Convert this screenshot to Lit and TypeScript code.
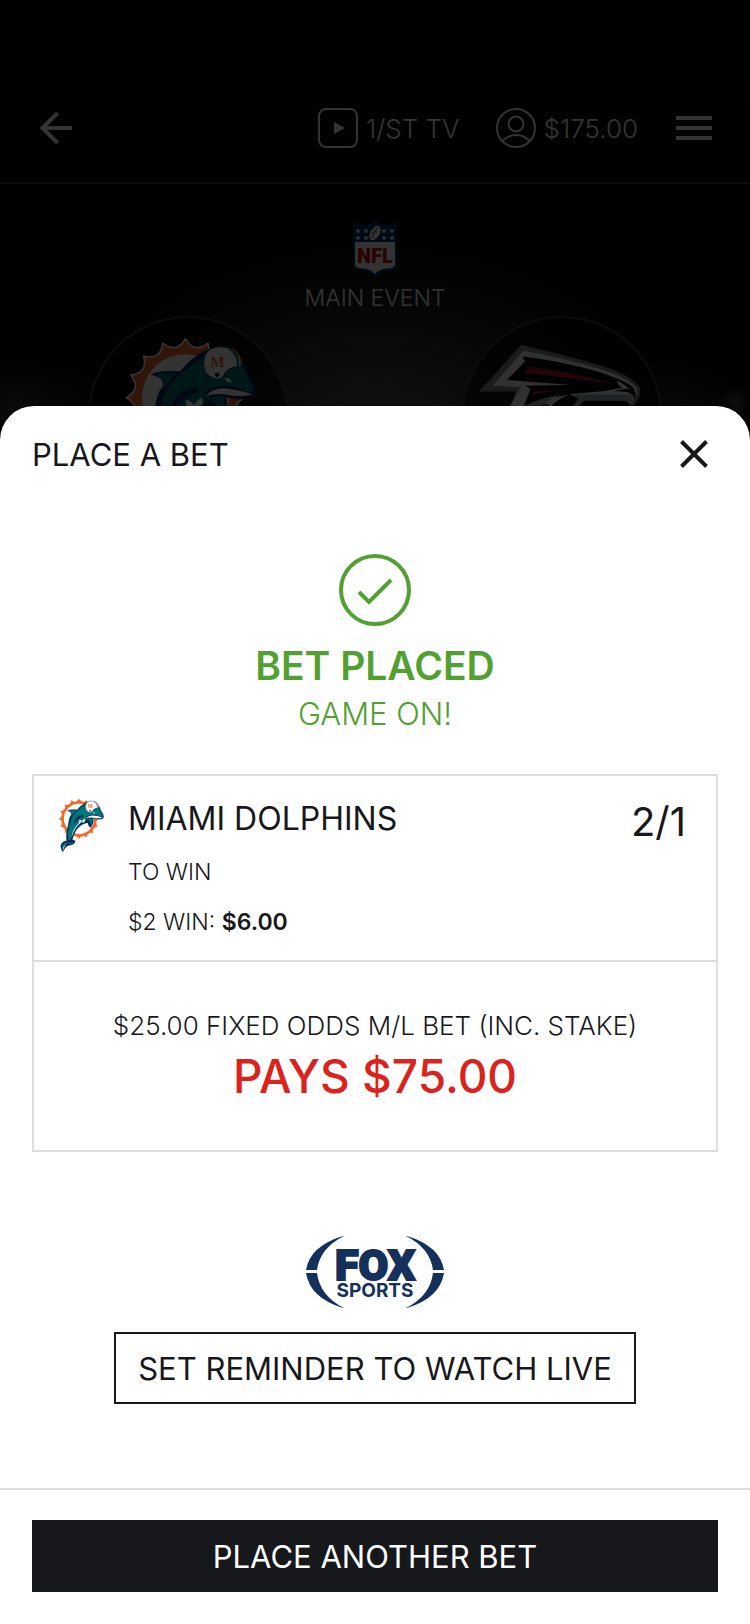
import { LitElement, html, svg, css } from "lit";
import { customElement, property } from "lit/decorators.js";

const SUN_CENTER = { x: 378, y: 562 };

function sunPath(tip: number, valley: number, spikes: number): string {
  const at = (radius: number, turn: number) => {
    const a = turn * Math.PI * 2 - Math.PI / 2;
    return `${(SUN_CENTER.x + radius * Math.cos(a)).toFixed(1)} ${(SUN_CENTER.y + radius * Math.sin(a)).toFixed(1)}`;
  };
  let d = `M${at(tip, 0)}`;
  for (let i = 0; i < spikes; i++) {
    d += `Q${at(valley, (i + 0.5) / spikes)} ${at(tip, (i + 1) / spikes)}`;
  }
  return d + "Z";
}

@customElement("dolphins-logo")
export class DolphinsLogo extends LitElement {
  static styles = css`
    :host { display: block; }
    svg { display: block; width: 100%; height: auto; }
    .letter { font-family: "Liberation Serif", serif; font-weight: 700; font-size: 46px; }
  `;

  render() {
    return html`
      <svg viewBox="196 382 398 470" aria-hidden="true">
        <path d=${sunPath(178, 134, 16)} fill="#f26a2e" stroke="#fff" stroke-width="5" stroke-linejoin="round" />
        <circle cx="378" cy="562" r="131" fill="#fff" />
        <path d="M300 500Q285 494 275 492Q310 478 362 484Q398 440 440 420Q500 400 540 436Q562 462 566 488Q590 520 592 545Q590 564 566 566Q530 568 500 560Q512 590 478 640Q460 630 452 596Q400 602 356 656Q326 700 320 744Q340 746 346 758Q338 786 300 790Q262 794 236 850Q214 812 222 784Q240 752 270 752Q262 680 286 606Q290 550 312 526Q312 508 300 500Z"
          fill="#0b2a55" stroke="#0b2a55" stroke-width="2" stroke-linejoin="round" />
        <path d="M288 493Q320 484 356 490Q326 508 312 540Q318 508 288 493Z" fill="#00757a" />
        <path d="M302 600Q310 540 360 494Q420 440 470 424Q530 420 552 466Q558 490 582 528Q588 544 566 546Q540 528 500 526Q460 526 434 548Q470 560 440 574Q420 590 384 604Q330 652 306 744L286 748Q272 670 302 600Z"
          fill="#00757a" />
        <path d="M372 604Q384 588 380 568Q400 572 412 596Q440 584 426 560Q398 588 350 640Q322 690 314 720Q318 660 372 604Z" fill="#fff" />
        <path d="M440 556Q462 532 500 534Q548 540 580 552Q544 562 500 552Q466 548 440 556Z" fill="#fff" />
        <path d="M452 566Q474 552 496 562Q500 590 478 620Q480 580 452 566Z" fill="#00757a" />
        <path d="M360 548Q410 520 420 540Q372 560 330 610Q336 574 360 548Z" fill="#0b2a55" />
        <path d="M230 792Q250 764 290 764Q260 780 238 824Q228 810 230 792Z" fill="#00757a" />
        <path d="M236 830Q238 802 266 784Q252 800 236 838Z" fill="#fff" />
        <path d="M286 776Q310 762 338 762Q326 776 296 782Z" fill="#00757a" />
        <path d="M496 504Q512 498 518 516Q506 520 496 504Z" fill="#fff" />
        <path d="M430 456Q434 412 480 408Q526 406 548 446Q552 466 540 468Q500 470 492 500Q472 514 450 496Q430 484 430 456Z"
          fill="#fff" stroke="#0b2a55" stroke-width="3" />
        <path d="M508 412Q540 430 536 466" fill="none" stroke="#00757a" stroke-width="7" />
        <path d="M518 414Q548 434 546 462" fill="none" stroke="#f26a2e" stroke-width="5" />
        <path d="M448 416Q424 446 438 480" fill="none" stroke="#00757a" stroke-width="4" />
        <circle cx="474" cy="493" r="7" fill="#0b2a55" />
        <text class="letter" x="475" y="470" text-anchor="middle" fill="#f26a2e">M</text>
      </svg>
    `;
  }
}

@customElement("falcons-logo")
export class FalconsLogo extends LitElement {
  static styles = css`
    :host { display: block; }
    svg { display: block; width: 100%; height: auto; }
  `;

  render() {
    return html`
      <svg viewBox="237 403 482 400" aria-hidden="true">
        <path d="M237 541L362 403Q480 428 600 465Q690 492 715 530Q722 560 692 588L640 640L500 780L300 700L346 541Z" fill="#84898c" />
        <path d="M278 524L370 420Q480 440 590 472Q680 500 704 528Q714 552 690 574L480 740L326 590L362 528Z" fill="#f4f4f4" />
        <path d="M320 507L374 452L366 437Q480 450 590 482Q676 510 696 530Q708 548 700 565Q694 542 670 542L640 540Q660 532 684 534Q660 510 646 510Q652 526 664 530L610 540L520 548L440 562L370 586L390 534L374 524L512 522Z" fill="#000" />
        <path d="M370 486L386 468Q500 480 632 518Q500 498 370 486Z" fill="#a71930" />
        <path d="M392 552L402 540L472 537Q430 546 392 552Z" fill="#a71930" />
        <path d="M372 584Q420 560 480 550Q440 566 424 590L372 590Z" fill="#a5acaf" />
        <path d="M404 590L424 580L448 578L438 590Z" fill="#a71930" />
        <path d="M448 590Q470 562 508 550L536 562L514 590Z" fill="#000" />
        <path d="M540 568L660 568Q690 568 684 590L530 600Z" fill="#000" />
        <path d="M518 550L688 550Q700 560 690 570L552 566L530 592L514 590L532 562Z" fill="#a5acaf" />
      </svg>
    `;
  }
}

@customElement("team-badge")
export class TeamBadge extends LitElement {
  @property() team = "";

  static styles = css`
    :host {
      display: block;
      box-sizing: border-box;
      width: 200px;
      height: 200px;
      border: 2px solid #3c3c3c;
      border-radius: 50%;
      background: rgba(0, 0, 0, 0.55);
    }
    .dolphins { width: 132px; margin: 20px 35px; }
    .falcons { width: 162px; margin: 27px 15px; }
  `;

  render() {
    return this.team === "dolphins"
      ? html`<dolphins-logo class="dolphins"></dolphins-logo>`
      : html`<falcons-logo class="falcons"></falcons-logo>`;
  }
}

const star = (x: number, y: number) => svg`
  <path transform="translate(${x} ${y})" fill="#fff"
    d="M0-2.8L.7-.9L2.7-.9L1.1.4L1.7 2.3L0 1.2L-1.7 2.3L-1.1.4L-2.7-.9L-.7-.9Z" />`;

@customElement("app-root")
export class AppRoot extends LitElement {
  static styles = css`
    :host {
      display: grid;
      min-height: 100vh;
      background: #000;
      color: #17181c;
      font-family: Inter, "Liberation Sans", sans-serif;
      font-size: 31px;
      font-weight: 400;
    }
    * { box-sizing: border-box; }
    h1, h2, h3, p { margin: 0; font-size: inherit; font-weight: inherit; }
    button { font: inherit; color: inherit; background: none; border: 0; padding: 0; cursor: pointer; }
    svg { display: block; flex: none; }
    a { color: inherit; text-decoration: none; }

    .page, .scrim, .sheet { grid-area: 1 / 1; min-width: 0; }
    .scrim { background: rgba(0, 0, 0, 0.8); }

    .page { color: #fff; font-weight: 300; }
    .topbar {
      display: flex;
      align-items: center;
      height: 184px;
      padding: 74px 38px 0 40px;
      border-bottom: 2px solid #383838;
      font-size: 26px;
      background: linear-gradient(#040a08, #000);
    }
    .back { margin-right: auto; }
    .link { display: flex; align-items: center; gap: 8px; }
    .tv { margin-right: 36px; }
    .account { margin-right: 38px; }

    .hero {
      display: flex;
      flex-direction: column;
      align-items: center;
      height: 360px;
      padding-top: 35px;
      font-size: 23px;
      background:
        radial-gradient(circle at 98% 218px, #444, transparent 16px),
        radial-gradient(ellipse 90px 50px at 90% 222px, #262626, transparent),
        radial-gradient(ellipse 100px 50px at 2% 222px, #303030, transparent),
        radial-gradient(ellipse 330px 210px at 50% 250px, #5c5c5c, #222 55%, transparent);
    }
    .event { line-height: 32px; margin: 5px 0 2px; }
    .teams { display: flex; justify-content: center; gap: 174px; }
    .nfl { font: 900 20px Roboto, sans-serif; }

    .sheet {
      align-self: end;
      background: #fff;
      border-radius: 34px 34px 0 0;
    }
    .sheet-head {
      display: flex;
      align-items: center;
      justify-content: space-between;
      height: 96px;
      padding: 0 32px;
    }
    .close { display: grid; place-items: center; width: 48px; height: 48px; }

    .status {
      display: flex;
      flex-direction: column;
      align-items: center;
      padding-top: 52px;
      color: #52a032;
      line-height: 48px;
    }
    .placed { margin-top: 16px; font-size: 39px; font-weight: 600; }
    .light { font-weight: 300; }

    .slip { margin: 36px 32px 0; border: 2px solid #dbe0df; }
    .pick {
      display: flex;
      align-items: flex-start;
      padding: 19px 30px 13px 24px;
      border-bottom: 2px solid #dbe0df;
    }
    .crest { width: 46px; margin: 3px 24px 0 0; }
    .details { flex: 1; font-size: 23px; line-height: 50px; font-weight: 300; }
    .team { margin-bottom: 4px; font-size: 32px; line-height: 48px; font-weight: 400; }
    .details strong { font-weight: 600; }
    .odds { font-size: 40px; line-height: 54px; }

    .payout { padding: 44px 0; text-align: center; }
    .stake { font-size: 26px; line-height: 40px; font-weight: 300; }
    .pays { font-size: 46px; line-height: 60px; font-weight: 500; color: #db231d; }

    .watch {
      display: flex;
      flex-direction: column;
      align-items: center;
      gap: 24px;
      padding: 84px 32px;
    }
    .fox { font: 900 43px Roboto, sans-serif; }
    .sports { font: 700 19px Inter, sans-serif; }
    .outline { width: 522px; max-width: 100%; height: 72px; border: 2px solid #17181c; white-space: nowrap; }

    .foot { padding: 30px 32px 32px; border-top: 2px solid #dbe0df; }
    .solid { width: 100%; height: 72px; background: #17181c; color: #fff; }
  `;

  private nflLogo() {
    return html`
      <svg width="44" height="58" viewBox="0 0 44 58" role="img" aria-label="NFL">
        <path d="M22 0Q25 6 32 6Q38 6 44 2V48Q43 51 36 51.500Q26 52 22 58Q18 52 8 51.500Q1 51 0 48V2Q6 6 12 6Q19 6 22 0Z" fill="#013369" />
        <path d="M2 23H42V46Q41 49 34 49.500Q26 50 22 55Q18 50 10 49.500Q3 49 2 46Z" fill="#fff" />
        ${[5, 13, 31, 39].map((x) => [star(x, 12), star(x, 19)])}
        <ellipse cx="22" cy="14" rx="4.500" ry="8" transform="rotate(32 22 14)" fill="#fff" />
        <path d="M19 19Q20 12 26 8M19 13L22 15M21 11L24 13" stroke="#013369" stroke-width="0.8" fill="none" />
        <text class="nfl" x="22" y="44" text-anchor="middle" fill="#d50a0a">NFL</text>
      </svg>
    `;
  }

  private foxLogo() {
    return html`
      <svg width="138" height="72" viewBox="0 0 138 72" role="img" aria-label="Fox Sports" fill="#15305a">
        <path d="M0 34Q4 10 37 0H38Q14 12 11 34ZM0 37H11Q14 60 38 72H37Q4 62 0 37Z" />
        <path d="M138 34Q134 10 101 0H100Q124 12 127 34ZM138 37H127Q124 60 100 72H101Q134 62 138 37Z" />
        <text class="fox" x="69" y="44" text-anchor="middle" stroke="#15305a" stroke-width="2">FOX</text>
        <text class="sports" x="69" y="61" text-anchor="middle">SPORTS</text>
      </svg>
    `;
  }

  render() {
    return html`
      <div class="page">
        <header class="topbar">
          <button class="back" aria-label="Back">
            <svg width="32" height="32" viewBox="0 0 32 32" fill="none" stroke="#fff" stroke-width="4">
              <path d="M32 16H3M17.500 1L2.500 16L17.500 31" />
            </svg>
          </button>
          <a class="link tv" href="#tv">
            <svg width="40" height="40" viewBox="0 0 40 40">
              <rect x="1" y="1" width="38" height="38" rx="7" fill="none" stroke="#fff" stroke-width="2" />
              <path d="M16 14L27 20L16 26Z" fill="#fff" />
            </svg>
            <span>1/ST TV</span>
          </a>
          <a class="link account" href="#account">
            <svg width="40" height="40" viewBox="0 0 40 40" fill="none" stroke="#fff" stroke-width="2">
              <circle cx="20" cy="20" r="19" />
              <circle cx="20" cy="16" r="7.500" />
              <path d="M6.500 33Q12 27 20 27Q28 27 33.500 33" />
            </svg>
            <span>$175.00</span>
          </a>
          <button aria-label="Menu">
            <svg width="36" height="24" viewBox="0 0 36 24" fill="#fff">
              <path d="M0 0H36V4H0ZM0 10H36V14H0ZM0 20H36V24H0Z" />
            </svg>
          </button>
        </header>
        <section class="hero">
          ${this.nflLogo()}
          <p class="event">MAIN EVENT</p>
          <div class="teams">
            <team-badge team="dolphins"></team-badge>
            <team-badge team="falcons"></team-badge>
          </div>
        </section>
      </div>
      <div class="scrim"></div>
      <main class="sheet" role="dialog" aria-labelledby="sheet-title">
        <header class="sheet-head">
          <h1 id="sheet-title">PLACE A BET</h1>
          <button class="close" aria-label="Close">
            <svg width="28" height="28" viewBox="0 0 28 28" fill="none" stroke="#17181c" stroke-width="4">
              <path d="M1.500 1.500L26.500 26.500M26.500 1.500L1.500 26.500" />
            </svg>
          </button>
        </header>
        <section class="status">
          <svg width="72" height="72" viewBox="0 0 72 72" fill="none" stroke="#52a032" stroke-width="4">
            <circle cx="36" cy="36" r="34" />
            <path d="M20 38L30 48L52 26" />
          </svg>
          <h2 class="placed">BET PLACED</h2>
          <p class="light">GAME ON!</p>
        </section>
        <section class="slip">
          <div class="pick">
            <dolphins-logo class="crest"></dolphins-logo>
            <div class="details">
              <h3 class="team">MIAMI DOLPHINS</h3>
              <p>TO WIN</p>
              <p>$2 WIN: <strong>$6.00</strong></p>
            </div>
            <span class="odds">2/1</span>
          </div>
          <div class="payout">
            <p class="stake">$25.00 FIXED ODDS M/L BET (INC. STAKE)</p>
            <p class="pays">PAYS $75.00</p>
          </div>
        </section>
        <section class="watch">
          ${this.foxLogo()}
          <button class="outline">SET REMINDER TO WATCH LIVE</button>
        </section>
        <footer class="foot">
          <button class="solid">PLACE ANOTHER BET</button>
        </footer>
      </main>
    `;
  }
}
